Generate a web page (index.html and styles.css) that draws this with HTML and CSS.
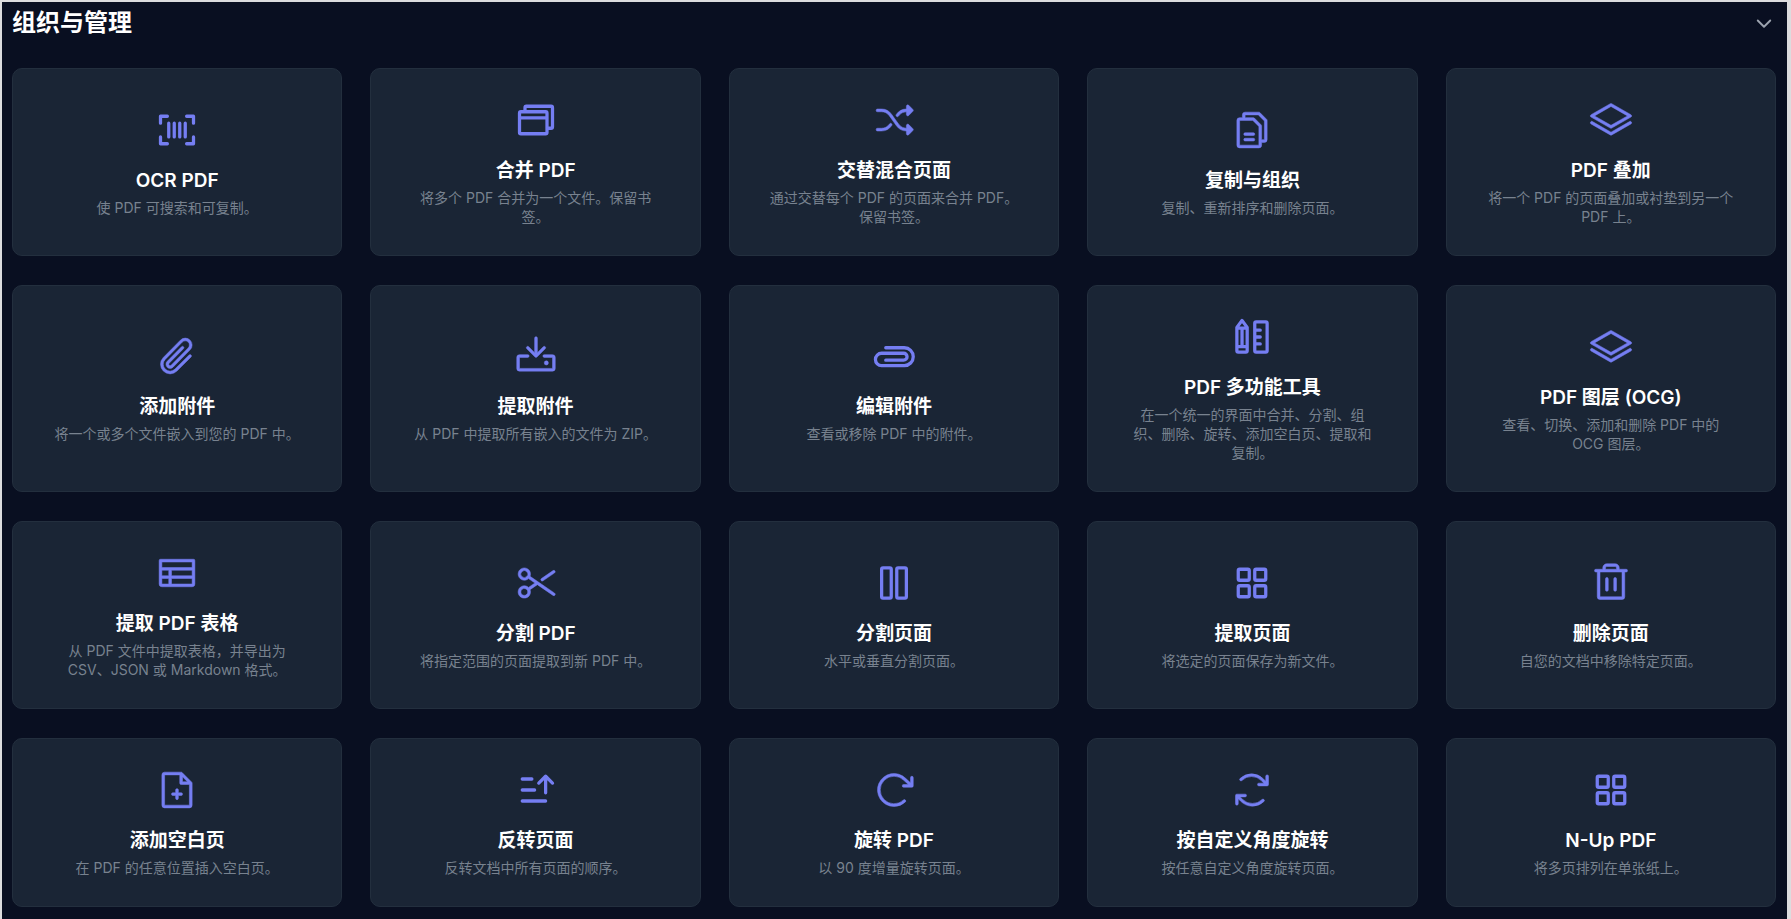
FILE: index.html
```html
<!DOCTYPE html>
<html lang="zh-CN">
<head>
	<meta charset="utf-8">
	<meta name="viewport" content="width=device-width, initial-scale=1">
	<title>组织与管理</title>
	<link rel="stylesheet" href="styles.css">
</head>
<body>
	<!-- icons -->
	<svg class="sprite" aria-hidden="true">
		<symbol id="i-barcode" viewBox="0 0 256 256"><path class="line" d="M184 48h40v40M72 208H32v-40M224 168v40h-40M32 88V48h40M80 88v80M112 88v80M144 88v80M176 88v80"/></symbol>
		<symbol id="i-browsers" viewBox="0 0 256 256"><path class="line" d="M40 80h144a8 8 0 0 1 8 8v112a8 8 0 0 1-8 8H40a8 8 0 0 1-8-8V88a8 8 0 0 1 8-8zM32 116h160M64 80V56a8 8 0 0 1 8-8h144a8 8 0 0 1 8 8v112a8 8 0 0 1-8 8h-24"/></symbol>
		<symbol id="i-shuffle" viewBox="0 0 256 256"><path d="M237.66,178.34a8,8,0,0,1,0,11.32l-24,24A8,8,0,0,1,200,208V192a72.15,72.15,0,0,1-57.65-30.14l-41.72-58.4A56.1,56.1,0,0,0,55.06,80H32a8,8,0,0,1,0-16H55.06a72.12,72.12,0,0,1,58.59,30.15l41.72,58.4A56.08,56.08,0,0,0,200,176V160a8,8,0,0,1,13.66-5.66ZM143,107a8,8,0,0,0,11.16-1.86l1.2-1.67A56.08,56.08,0,0,1,200,80V96a8,8,0,0,0,13.66,5.66l24-24a8,8,0,0,0,0-11.32l-24-24A8,8,0,0,0,200,48V64a72.15,72.15,0,0,0-57.65,30.14l-1.2,1.67A8,8,0,0,0,143,107Zm-30,42a8,8,0,0,0-11.16,1.86l-1.2,1.67A56.1,56.1,0,0,1,55.06,176H32a8,8,0,0,0,0,16H55.06a72.12,72.12,0,0,0,58.59-30.15l1.2-1.67A8,8,0,0,0,113,149Z"/></symbol>
		<symbol id="i-files" viewBox="0 0 256 256"><path d="M213.66,66.34l-40-40A8,8,0,0,0,168,24H88A16,16,0,0,0,72,40V56H56A16,16,0,0,0,40,72V216a16,16,0,0,0,16,16H168a16,16,0,0,0,16-16V200h16a16,16,0,0,0,16-16V72A8,8,0,0,0,213.66,66.34ZM168,216H56V72h76.69L168,107.31V216Zm32-32H184V104a8,8,0,0,0-2.34-5.66l-40-40A8,8,0,0,0,136,56H88V40h76.69L200,75.31Zm-56-32a8,8,0,0,1-8,8H88a8,8,0,0,1,0-16h48A8,8,0,0,1,144,152Zm0,32a8,8,0,0,1-8,8H88a8,8,0,0,1,0-16h48A8,8,0,0,1,144,184Z"/></symbol>
		<symbol id="i-stack" viewBox="0 0 256 256"><path d="M12,111l112,64a8,8,0,0,0,7.94,0l112-64a8,8,0,0,0,0-13.9l-112-64a8,8,0,0,0-7.94,0l-112,64A8,8,0,0,0,12,111ZM128,49.21,223.87,104,128,158.79,32.13,104ZM246.94,140A8,8,0,0,1,244,151L132,215a8,8,0,0,1-7.94,0L12,151A8,8,0,0,1,20,137.05l108,61.74,108-61.74A8,8,0,0,1,246.94,140Z"/></symbol>
		<symbol id="i-clip" viewBox="0 0 256 256"><path d="M209.66,122.34a8,8,0,0,1,0,11.32l-82.05,82a56,56,0,0,1-79.2-79.21L147.67,35.73a40,40,0,1,1,56.61,56.55L105,193A24,24,0,1,1,71,159L154.3,74.38A8,8,0,1,1,165.7,85.6L82.39,170.31a8,8,0,1,0,11.27,11.36L192.93,81A24,24,0,1,0,159,47L59.76,147.68a40,40,0,1,0,56.53,56.62l82.06-82A8,8,0,0,1,209.66,122.34Z"/></symbol>
		<symbol id="i-download" viewBox="0 0 256 256"><path d="M240,136v64a16,16,0,0,1-16,16H32a16,16,0,0,1-16-16V136a16,16,0,0,1,16-16H80a8,8,0,0,1,0,16H32v64H224V136H176a8,8,0,0,1,0-16h48A16,16,0,0,1,240,136Zm-117.66-2.34a8,8,0,0,0,11.32,0l48-48a8,8,0,0,0-11.32-11.32L136,108.69V24a8,8,0,0,0-16,0v84.69L85.66,74.34A8,8,0,0,0,74.34,85.66ZM200,168a12,12,0,1,0-12,12A12,12,0,0,0,200,168Z"/></symbol>
		<symbol id="i-clip-flat" viewBox="0 0 256 256"><path class="line" d="M80 80h108a52 52 0 0 1 0 104H56a36 36 0 0 1 0-72h128a20 20 0 0 1 0 40H80"/></symbol>
		<symbol id="i-pencil-ruler" viewBox="0 0 256 256"><path class="line" d="M40 72l30-40 30 40v136a8 8 0 0 1-8 8H48a8 8 0 0 1-8-8zM40 76h60M40 184h60M70 76v108M152 40h56a8 8 0 0 1 8 8v160a8 8 0 0 1-8 8h-56a8 8 0 0 1-8-8V48a8 8 0 0 1 8-8zM144 88h32M144 128h32M144 168h32"/></symbol>
		<symbol id="i-table" viewBox="0 0 256 256"><path d="M224,48H32a8,8,0,0,0-8,8V192a16,16,0,0,0,16,16H216a16,16,0,0,0,16-16V56A8,8,0,0,0,224,48ZM40,112H80v32H40Zm56,0H216v32H96ZM216,64V96H40V64ZM40,160H80v32H40Zm176,32H96V160H216v32Z"/></symbol>
		<symbol id="i-scissors" viewBox="0 0 256 256"><path d="M157.73,113.13A8,8,0,0,1,159.82,102L227.48,55.7a8,8,0,0,1,9,13.21l-67.67,46.3a7.92,7.92,0,0,1-4.51,1.4A8,8,0,0,1,157.73,113.13Zm80.87,85.09a8,8,0,0,1-11.12,2.08L136,137.7,93.49,166.78a36,36,0,1,1-9-13.19L121.83,128,84.44,102.41a35.86,35.86,0,1,1,9-13.19l143,97.87A8,8,0,0,1,238.6,198.22ZM80,180a20,20,0,1,0-5.86,14.14A19.85,19.85,0,0,0,80,180ZM74.14,90.13a20,20,0,1,0-28.28,0A19.85,19.85,0,0,0,74.14,90.13Z"/></symbol>
		<symbol id="i-columns" viewBox="0 0 256 256"><g class="line"><rect x="56" y="40" width="56" height="176" rx="8"/><rect x="144" y="40" width="56" height="176" rx="8"/></g></symbol>
		<symbol id="i-squares" viewBox="0 0 256 256"><g class="line"><rect x="48" y="48" width="64" height="64" rx="8"/><rect x="144" y="48" width="64" height="64" rx="8"/><rect x="48" y="144" width="64" height="64" rx="8"/><rect x="144" y="144" width="64" height="64" rx="8"/></g></symbol>
		<symbol id="i-trash" viewBox="0 0 256 256"><path d="M216,48H176V40a24,24,0,0,0-24-24H104A24,24,0,0,0,80,40v8H40a8,8,0,0,0,0,16h8V208a16,16,0,0,0,16,16H192a16,16,0,0,0,16-16V64h8a8,8,0,0,0,0-16ZM96,40a8,8,0,0,1,8-8h48a8,8,0,0,1,8,8v8H96Zm96,168H64V64H192ZM112,104v64a8,8,0,0,1-16,0V104a8,8,0,0,1,16,0Zm48,0v64a8,8,0,0,1-16,0V104a8,8,0,0,1,16,0Z"/></symbol>
		<symbol id="i-file-plus" viewBox="0 0 256 256"><path d="M213.66,82.34l-56-56A8,8,0,0,0,152,24H56A16,16,0,0,0,40,40V216a16,16,0,0,0,16,16H200a16,16,0,0,0,16-16V88A8,8,0,0,0,213.66,82.34ZM160,51.31,188.69,80H160ZM200,216H56V40h88V88a8,8,0,0,0,8,8h48V216Zm-40-64a8,8,0,0,1-8,8H136v16a8,8,0,0,1-16,0V160H104a8,8,0,0,1,0-16h16V128a8,8,0,0,1,16,0v16h16A8,8,0,0,1,160,152Z"/></symbol>
		<symbol id="i-sort" viewBox="0 0 256 256"><path class="line" d="M48 64h56M48 128h72M48 192h136M144 88l40-40 40 40M184 48v96"/></symbol>
		<symbol id="i-rotate" viewBox="0 0 256 256"><path d="M240,56v48a8,8,0,0,1-8,8H184a8,8,0,0,1,0-16H211.4L184.81,71.64l-.25-.24a80,80,0,1,0-1.67,114.78,8,8,0,0,1,11,11.63A95.44,95.44,0,0,1,128,224h-1.32A96,96,0,1,1,195.75,60L224,85.8V56a8,8,0,1,1,16,0Z"/></symbol>
		<symbol id="i-refresh" viewBox="0 0 256 256"><path d="M224,48V96a8,8,0,0,1-8,8H168a8,8,0,0,1,0-16h28.69L182.06,73.37a79.56,79.56,0,0,0-56.13-23.43h-.45A79.52,79.52,0,0,0,69.59,72.71,8,8,0,0,1,58.41,61.27a96,96,0,0,1,135,.79L208,76.69V48a8,8,0,0,1,16,0ZM186.41,183.29a80,80,0,0,1-112.47-.66L59.31,168H88a8,8,0,0,0,0-16H40a8,8,0,0,0-8,8v48a8,8,0,0,0,16,0V179.31l14.63,14.63A95.43,95.43,0,0,0,130,222.06h.53a95.36,95.36,0,0,0,67.07-27.33,8,8,0,0,0-11.18-11.44Z"/></symbol>
		<symbol id="i-caret" viewBox="0 0 256 256"><path class="line line_caret" d="M208 96l-80 80-80-80"/></symbol>
	</svg>

	<section class="tools">
		<h2 class="tools__head">
			<button class="tools__toggle" type="button" aria-expanded="true">
				<span>组织与管理</span>
				<svg class="tools__caret"><use href="#i-caret"/></svg>
			</button>
		</h2>

		<div class="tools__grid">
			<a class="tool" href="#ocr">
				<svg class="tool__icon"><use href="#i-barcode"/></svg>
				<h3 class="tool__name">OCR PDF</h3>
				<p class="tool__txt">使 PDF 可搜索和可复制。</p>
			</a>
			<a class="tool" href="#merge">
				<svg class="tool__icon"><use href="#i-browsers"/></svg>
				<h3 class="tool__name">合并 PDF</h3>
				<p class="tool__txt">将多个 PDF 合并为一个文件。保留书签。</p>
			</a>
			<a class="tool" href="#alternate">
				<svg class="tool__icon"><use href="#i-shuffle"/></svg>
				<h3 class="tool__name">交替混合页面</h3>
				<p class="tool__txt">通过交替每个 PDF 的页面来合并 PDF。保留书签。</p>
			</a>
			<a class="tool" href="#organize">
				<svg class="tool__icon"><use href="#i-files"/></svg>
				<h3 class="tool__name">复制与组织</h3>
				<p class="tool__txt">复制、重新排序和删除页面。</p>
			</a>
			<a class="tool" href="#overlay">
				<svg class="tool__icon"><use href="#i-stack"/></svg>
				<h3 class="tool__name">PDF 叠加</h3>
				<p class="tool__txt">将一个 PDF 的页面叠加或衬垫到另一个 PDF 上。</p>
			</a>

			<a class="tool" href="#add-attachments">
				<svg class="tool__icon"><use href="#i-clip"/></svg>
				<h3 class="tool__name">添加附件</h3>
				<p class="tool__txt">将一个或多个文件嵌入到您的 PDF 中。</p>
			</a>
			<a class="tool" href="#extract-attachments">
				<svg class="tool__icon"><use href="#i-download"/></svg>
				<h3 class="tool__name">提取附件</h3>
				<p class="tool__txt">从 PDF 中提取所有嵌入的文件为 ZIP。</p>
			</a>
			<a class="tool" href="#edit-attachments">
				<svg class="tool__icon"><use href="#i-clip-flat"/></svg>
				<h3 class="tool__name">编辑附件</h3>
				<p class="tool__txt">查看或移除 PDF 中的附件。</p>
			</a>
			<a class="tool" href="#multi-tool">
				<svg class="tool__icon"><use href="#i-pencil-ruler"/></svg>
				<h3 class="tool__name">PDF 多功能工具</h3>
				<p class="tool__txt">在一个统一的界面中合并、分割、组织、删除、旋转、添加空白页、提取和复制。</p>
			</a>
			<a class="tool" href="#layers">
				<svg class="tool__icon"><use href="#i-stack"/></svg>
				<h3 class="tool__name">PDF 图层 (OCG)</h3>
				<p class="tool__txt">查看、切换、添加和删除 PDF 中的 OCG 图层。</p>
			</a>

			<a class="tool" href="#tables">
				<svg class="tool__icon"><use href="#i-table"/></svg>
				<h3 class="tool__name">提取 PDF 表格</h3>
				<p class="tool__txt">从 PDF 文件中提取表格，并导出为 CSV、JSON 或 Markdown 格式。</p>
			</a>
			<a class="tool" href="#split">
				<svg class="tool__icon"><use href="#i-scissors"/></svg>
				<h3 class="tool__name">分割 PDF</h3>
				<p class="tool__txt">将指定范围的页面提取到新 PDF 中。</p>
			</a>
			<a class="tool" href="#split-pages">
				<svg class="tool__icon"><use href="#i-columns"/></svg>
				<h3 class="tool__name">分割页面</h3>
				<p class="tool__txt">水平或垂直分割页面。</p>
			</a>
			<a class="tool" href="#extract-pages">
				<svg class="tool__icon"><use href="#i-squares"/></svg>
				<h3 class="tool__name">提取页面</h3>
				<p class="tool__txt">将选定的页面保存为新文件。</p>
			</a>
			<a class="tool" href="#delete-pages">
				<svg class="tool__icon"><use href="#i-trash"/></svg>
				<h3 class="tool__name">删除页面</h3>
				<p class="tool__txt">自您的文档中移除特定页面。</p>
			</a>

			<a class="tool" href="#blank-page">
				<svg class="tool__icon"><use href="#i-file-plus"/></svg>
				<h3 class="tool__name">添加空白页</h3>
				<p class="tool__txt">在 PDF 的任意位置插入空白页。</p>
			</a>
			<a class="tool" href="#reverse">
				<svg class="tool__icon"><use href="#i-sort"/></svg>
				<h3 class="tool__name">反转页面</h3>
				<p class="tool__txt">反转文档中所有页面的顺序。</p>
			</a>
			<a class="tool" href="#rotate">
				<svg class="tool__icon"><use href="#i-rotate"/></svg>
				<h3 class="tool__name">旋转 PDF</h3>
				<p class="tool__txt">以 90 度增量旋转页面。</p>
			</a>
			<a class="tool" href="#rotate-custom">
				<svg class="tool__icon"><use href="#i-refresh"/></svg>
				<h3 class="tool__name">按自定义角度旋转</h3>
				<p class="tool__txt">按任意自定义角度旋转页面。</p>
			</a>
			<a class="tool" href="#n-up">
				<svg class="tool__icon"><use href="#i-squares"/></svg>
				<h3 class="tool__name">N-Up PDF</h3>
				<p class="tool__txt">将多页排列在单张纸上。</p>
			</a>
		</div>
	</section>
</body>
</html>
```

FILE: styles.css
```css
* {
	box-sizing: border-box;
}

html {
	background-color: #dcdcde;
}

body {
	margin: 0;
	padding: 2px 4px 0 2px;
	font-family: Inter, "Noto Sans CJK SC", sans-serif;
}

.sprite {
	display: none;
}

.line {
	fill: none;
	stroke: currentColor;
	stroke-width: 19;
	stroke-linecap: round;
	stroke-linejoin: round;
}
	.line_caret {
		stroke-width: 24;
	}


.tools {
	min-height: calc(100vh - 2px);
	padding: 3px 11px 10px 10px;
	background-color: #090f21;
}
	.tools__head {
		margin: 0 0 28px;
		font-size: 24px;
		line-height: 35px;
	}

	.tools__toggle {
		display: flex;
		align-items: center;
		justify-content: space-between;
		width: 100%;
		padding: 0 2px 0 0;
		border: 0;
		background: none;
		color: #fff;
		font: inherit;
		cursor: pointer;
	}

	.tools__caret {
		width: 20px;
		height: 20px;
		color: #9ca3af;
	}

	.tools__grid {
		display: grid;
		grid-template-columns: repeat(5, minmax(0, 1fr));
		gap: 29px 28px;
	}


.tool {
	display: flex;
	flex-direction: column;
	align-items: center;
	justify-content: center;
	padding: 29px 28px;
	border: 1px solid #232f3e;
	border-radius: 10px;
	background-color: #1a2535;
	color: #fff;
	text-align: center;
	text-decoration: none;
}
	.tool:hover {
		border-color: #818cf8;
	}

	.tool__icon {
		width: 44px;
		height: 44px;
		margin-bottom: 14px;
		color: #757ef2;
		fill: currentColor;
		stroke: currentColor;
		stroke-width: 3;
	}

	.tool__name {
		margin: 0;
		font-size: 19px;
		font-weight: 600;
		line-height: 29px;
	}

	.tool__txt {
		margin: 3px 0 0;
		padding: 0 11px;
		color: #78828f;
		font-size: 14px;
		line-height: 19px;
	}
```
